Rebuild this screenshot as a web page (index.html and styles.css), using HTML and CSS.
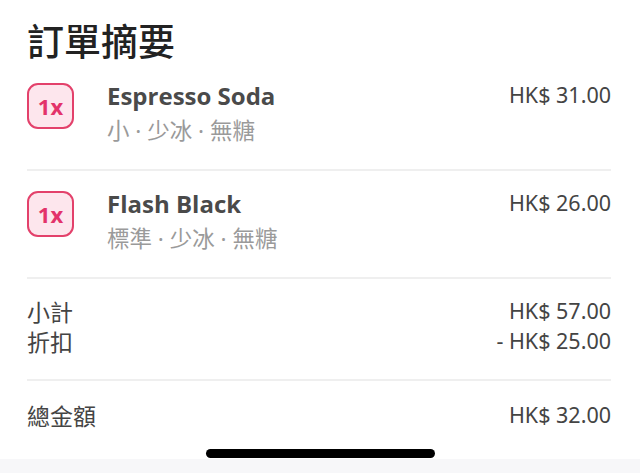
FILE: index.html
```html
<!DOCTYPE html>
<html lang="zh-Hant">
<head>
<meta charset="utf-8">
<link rel="stylesheet" href="styles.css">
</head>
<body>
<div class="page">
  <h1 class="title">訂單摘要</h1>
  <div class="items">
    <div class="item">
      <div class="qty">1x</div>
      <div class="info">
        <div class="name">Espresso Soda</div>
        <div class="opts">小 · 少冰 · 無糖</div>
      </div>
      <div class="price">HK$ 31.00</div>
    </div>
    <div class="item">
      <div class="qty">1x</div>
      <div class="info">
        <div class="name">Flash Black</div>
        <div class="opts">標準 · 少冰 · 無糖</div>
      </div>
      <div class="price">HK$ 26.00</div>
    </div>
  </div>
  <div class="sums">
    <div class="row"><span class="label">小計</span><span>HK$ 57.00</span></div>
    <div class="row"><span class="label">折扣</span><span>- HK$ 25.00</span></div>
  </div>
  <div class="total">
    <div class="row"><span class="label">總金額</span><span>HK$ 32.00</span></div>
  </div>
</div>
<div class="home-area"><div class="home-bar"></div></div>
</body>
</html>
```
FILE: styles.css
```css
html, body {
  margin: 0;
  padding: 0;
  background: #fff;
  height: 100%;
  overflow: hidden;
}
body {
  font-family: "Noto Sans", "Noto Sans CJK TC", sans-serif;
  color: #444;
  position: relative;
}
.page {
  padding: 14px 29px 0 27px;
}
.title {
  margin: 0 0 -3px;
  font-family: "Noto Sans CJK TC", sans-serif;
  font-weight: 500;
  font-size: 37px;
  line-height: 52px;
  color: #222;
}
.item {
  display: flex;
  align-items: flex-start;
  padding: 20px 0 23px;
  border-bottom: 2px solid #efefef;
}
.qty {
  width: 43px;
  height: 42px;
  border: 2px solid #e3416b;
  background: #fde6ed;
  border-radius: 11px;
  display: flex;
  align-items: center;
  justify-content: center;
  font-family: "Open Sans", sans-serif;
  font-weight: 700;
  font-size: 22px;
  color: #e3336a;
  flex: none;
}
.info {
  flex: 1;
  margin: -2px 0 0 33px;
}
.name {
  font-family: "Open Sans", "Noto Sans", sans-serif;
  font-weight: 700;
  font-size: 24px;
  line-height: 30px;
  color: #4a4a4a;
}
.opts {
  font-family: "Noto Sans", "Noto Sans CJK TC", sans-serif;
  font-size: 22.5px;
  line-height: 30px;
  color: #9a9a9a;
  margin-top: 5px;
}
.price {
  font-family: "Noto Sans", sans-serif;
  font-size: 21.5px;
  line-height: 30px;
  color: #444;
  margin-top: -3px;
}
.row {
  display: flex;
  justify-content: space-between;
  align-items: center;
  font-family: "Noto Sans", "Noto Sans CJK TC", sans-serif;
  font-size: 21.5px;
  line-height: 30px;
  color: #444;
}
.label {
  font-family: "Noto Sans CJK TC", sans-serif;
  font-size: 23px;
}
.sums {
  padding: 17px 0 23px;
  border-bottom: 2px solid #efefef;
}
.total {
  padding: 19px 0;
}
.home-area {
  position: absolute;
  left: 0;
  right: 0;
  bottom: 0;
  height: 24px;
  background: linear-gradient(#fff 0, #fff 10px, #f7f7f9 10px);
}
.home-bar {
  position: absolute;
  left: 206px;
  width: 229px;
  top: 0;
  height: 9px;
  background: #000;
  border-radius: 5px;
}
```
